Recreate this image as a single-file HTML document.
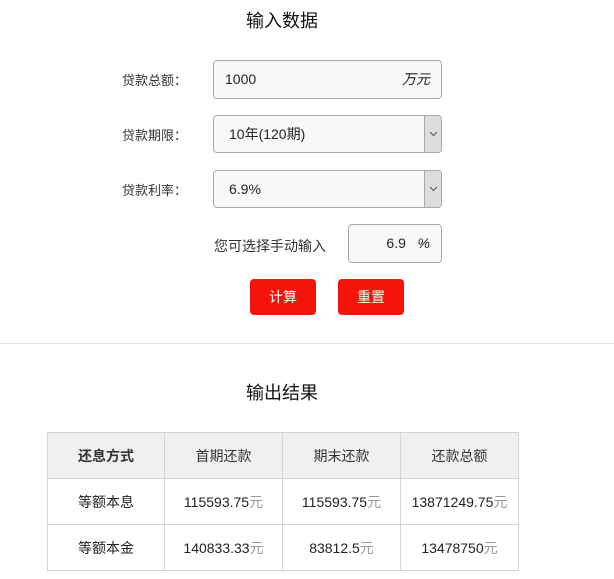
<!DOCTYPE html>
<html><head><meta charset="utf-8"><style>
*{margin:0;padding:0;box-sizing:border-box}
body{width:614px;height:579px;background:#fff;font-family:"Liberation Sans","Noto Sans CJK SC",sans-serif;color:#333;position:relative;overflow:hidden}
.a{position:absolute}
.h{font-size:18px;color:#111;text-align:center}
.lbl{font-size:13px;color:#333;left:122px;font-family:"Noto Sans CJK SC",sans-serif;line-height:18px}
.box{border:1px solid #a9a9a9;border-radius:4px;background:#f8f8f8;font-size:14px;color:#222}
.sel{width:17px;position:absolute;right:0;top:0;bottom:0;background:#ddd;border-left:1px solid #aaa;border-radius:0 3px 3px 0}
.sel svg{position:absolute;left:4px;top:15px}
.btn{background:#f5140a;color:#fff;font-size:14px;border-radius:4px;width:66px;height:36px;line-height:36px;text-align:center;top:279px}
table{position:absolute;left:47px;top:432px;border-collapse:collapse;font-size:14px;table-layout:fixed;width:471px}
td,th{border:1px solid #d4d4d4;height:46px;text-align:center;color:#222;font-weight:normal;padding:0}
th{background:#f0f0f0;color:#333}
th:first-child{font-weight:bold}
.y{color:#999}
</style></head><body>
<div class="a h" style="top:7px;left:0;width:564px">输入数据</div>
<div class="a lbl" style="top:71px">贷款总额：</div>
<div class="a box" style="left:213px;top:60px;width:229px;height:39px;line-height:37px;padding-left:11px">1000<i style="position:absolute;right:11px;font-size:14px">万元</i></div>
<div class="a lbl" style="top:126px">贷款期限：</div>
<div class="a box" style="left:213px;top:115px;width:229px;height:38px;line-height:36px;padding-left:15px">10年(120期)<div class="sel"><svg width="9" height="6"><path d="M1 1l3.5 3.5L8 1" stroke="#555" fill="none"/></svg></div></div>
<div class="a lbl" style="top:181px">贷款利率：</div>
<div class="a box" style="left:213px;top:170px;width:229px;height:38px;line-height:36px;padding-left:15px">6.9%<div class="sel"><svg width="9" height="6"><path d="M1 1l3.5 3.5L8 1" stroke="#555" fill="none"/></svg></div></div>
<div class="a" style="left:214px;top:236px;font-size:14px;color:#333">您可选择手动输入</div>
<div class="a box" style="left:348px;top:224px;width:94px;height:39px;line-height:37px;text-align:right;padding-right:11px">6.9 &nbsp;&nbsp;<i>%</i></div>
<div class="a btn" style="left:250px">计算</div>
<div class="a btn" style="left:338px">重置</div>
<div class="a" style="left:0;top:343px;width:614px;height:1px;background:#ddd"></div>
<div class="a h" style="top:379px;left:0;width:564px">输出结果</div>
<table>
<colgroup><col style="width:117px"><col style="width:118px"><col style="width:118px"><col style="width:118px"></colgroup>
<tr><th>还息方式</th><th>首期还款</th><th>期末还款</th><th>还款总额</th></tr>
<tr><td>等额本息</td><td>115593.75<span class="y">元</span></td><td>115593.75<span class="y">元</span></td><td>13871249.75<span class="y">元</span></td></tr>
<tr><td>等额本金</td><td>140833.33<span class="y">元</span></td><td>83812.5<span class="y">元</span></td><td>13478750<span class="y">元</span></td></tr>
</table>
</body></html>
